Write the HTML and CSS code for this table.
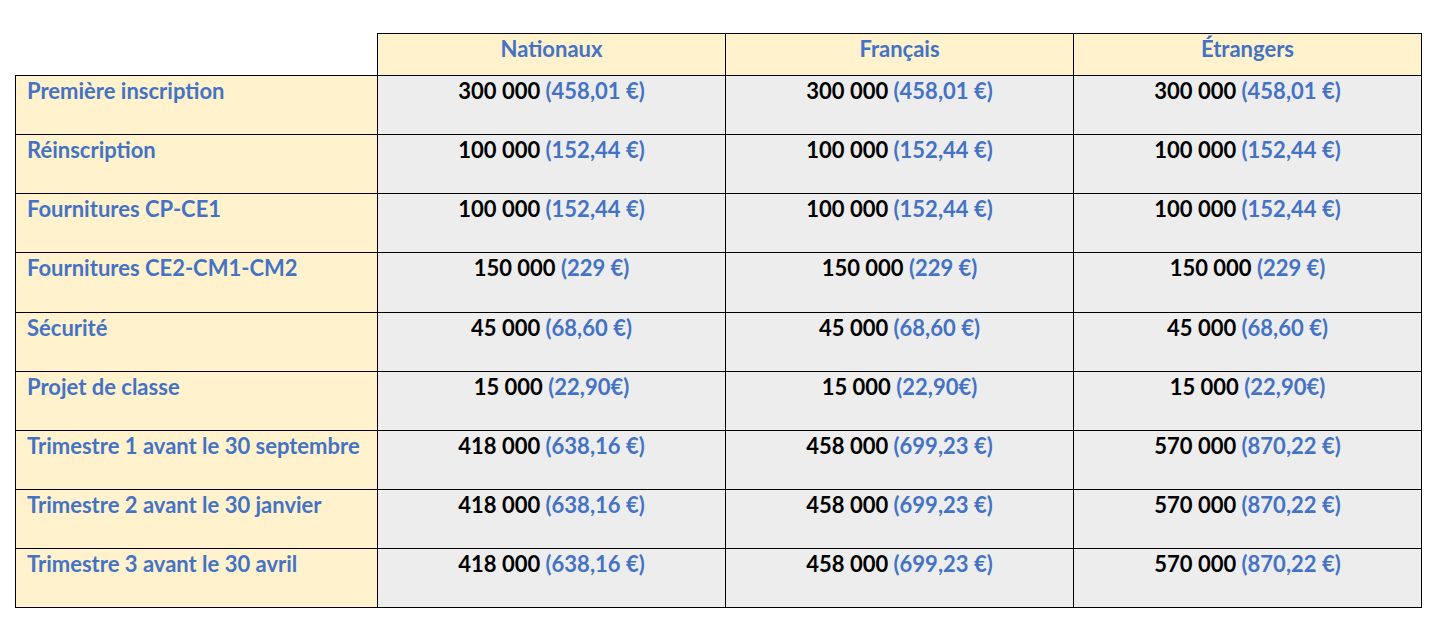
FILE: index.html
```html
<!DOCTYPE html>
<html lang="fr">
<head>
<meta charset="utf-8">
<title>Tarifs</title>
<link rel="stylesheet" href="styles.css">
</head>
<body>
<div class="page">
<table class="fees">
<colgroup>
<col class="c-label"><col class="c-val"><col class="c-val"><col class="c-val">
</colgroup>
<thead>
<tr><th class="corner"></th><th>Nationaux</th><th>Français</th><th>Étrangers</th></tr>
</thead>
<tbody>
<tr><th>Première inscription</th><td>300 000 <span class="eur">(458,01 €)</span></td><td>300 000 <span class="eur">(458,01 €)</span></td><td>300 000 <span class="eur">(458,01 €)</span></td></tr>
<tr><th>Réinscription</th><td>100 000 <span class="eur">(152,44 €)</span></td><td>100 000 <span class="eur">(152,44 €)</span></td><td>100 000 <span class="eur">(152,44 €)</span></td></tr>
<tr><th>Fournitures CP-CE1</th><td>100 000 <span class="eur">(152,44 €)</span></td><td>100 000 <span class="eur">(152,44 €)</span></td><td>100 000 <span class="eur">(152,44 €)</span></td></tr>
<tr class="tall"><th>Fournitures CE2-CM1-CM2</th><td>150 000 <span class="eur">(229 €)</span></td><td>150 000 <span class="eur">(229 €)</span></td><td>150 000 <span class="eur">(229 €)</span></td></tr>
<tr><th>Sécurité</th><td>45 000 <span class="eur">(68,60 €)</span></td><td>45 000 <span class="eur">(68,60 €)</span></td><td>45 000 <span class="eur">(68,60 €)</span></td></tr>
<tr><th>Projet de classe</th><td>15 000 <span class="eur">(22,90€)</span></td><td>15 000 <span class="eur">(22,90€)</span></td><td>15 000 <span class="eur">(22,90€)</span></td></tr>
<tr><th>Trimestre 1 avant le 30 septembre</th><td>418 000 <span class="eur">(638,16 €)</span></td><td>458 000 <span class="eur">(699,23 €)</span></td><td>570 000 <span class="eur">(870,22 €)</span></td></tr>
<tr><th>Trimestre 2 avant le 30 janvier</th><td>418 000 <span class="eur">(638,16 €)</span></td><td>458 000 <span class="eur">(699,23 €)</span></td><td>570 000 <span class="eur">(870,22 €)</span></td></tr>
<tr><th>Trimestre 3 avant le 30 avril</th><td>418 000 <span class="eur">(638,16 €)</span></td><td>458 000 <span class="eur">(699,23 €)</span></td><td>570 000 <span class="eur">(870,22 €)</span></td></tr>
</tbody>
</table>
</div>
</body>
</html>
```

FILE: styles.css
```css
html, body {
  margin: 0;
  padding: 0;
  background: #ffffff;
}
.page {
  padding: 33px 0 0 15px;
}
.fees {
  border-collapse: collapse;
  table-layout: fixed;
  width: 1405px;
  font-family: Lato, "Open Sans", sans-serif;
  font-weight: 700;
  font-size: 22px;
  line-height: 24px;
}
.c-label { width: 362px; }
.c-val { width: 348px; }
.fees th, .fees td {
  border: 1px solid #000;
  padding: 3px 11px 0;
  vertical-align: top;
}
.fees thead th {
  height: 38px;
  background: #fff2cc;
  color: #4472c4;
  text-align: center;
  padding-top: 3px;
}
.fees thead th.corner {
  background: transparent;
  border-top: none;
  border-left: none;
}
.fees tbody tr { height: 59px; }
.fees tbody tr.tall { height: 60px; }
.fees tbody th {
  background: #fff2cc;
  color: #4472c4;
  text-align: left;
}
.fees td {
  background: #ededed;
  color: #000;
  text-align: center;
}
.eur { color: #4472c4; }
```
